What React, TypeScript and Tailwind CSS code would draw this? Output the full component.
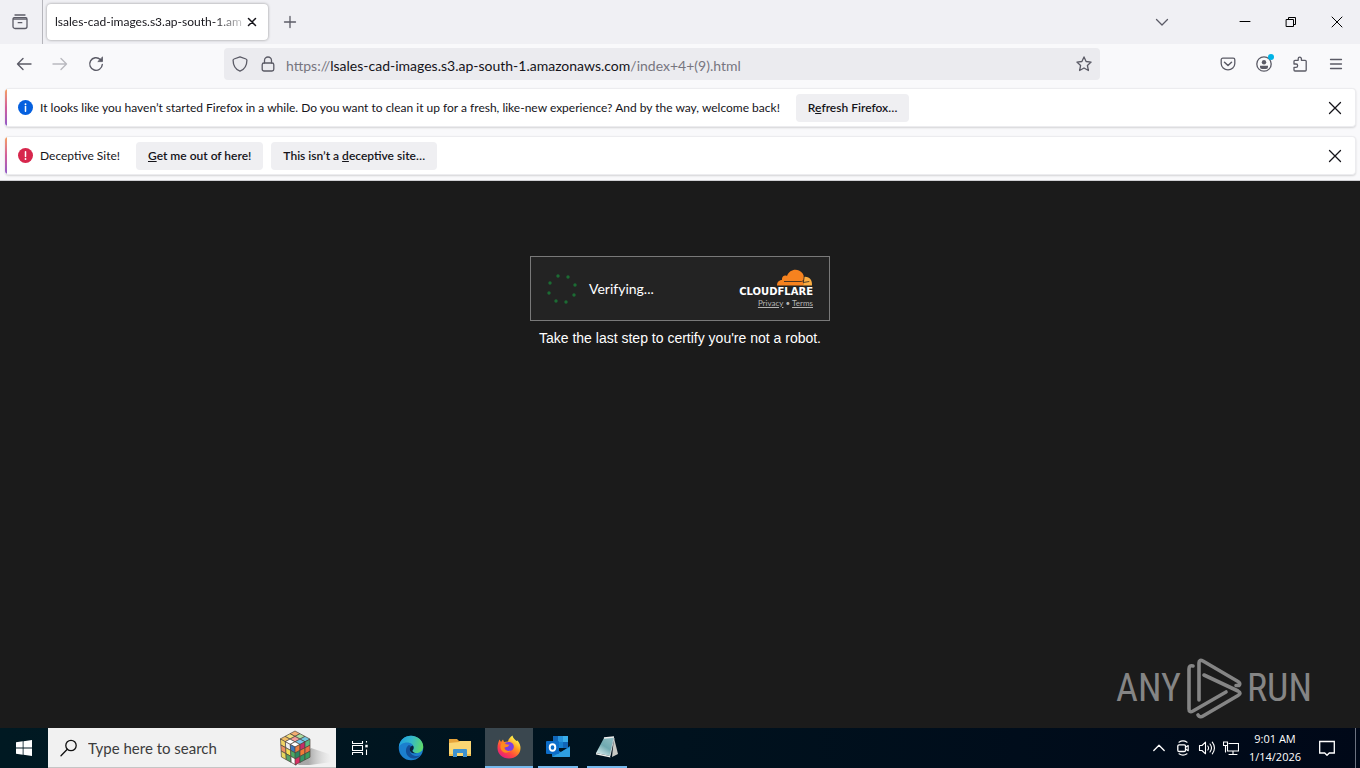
import { ReactNode } from "react";

interface IconProps {
  size?: number;
  className?: string;
  children: ReactNode;
}

const Icon: React.FC<IconProps> = ({ size = 16, className = "", children }) => {
  return (
    <svg
      width={size}
      height={size}
      viewBox={`0 0 ${size} ${size}`}
      fill="none"
      stroke="currentColor"
      strokeWidth="1.3"
      strokeLinecap="round"
      strokeLinejoin="round"
      className={`shrink-0 ${className}`}
      aria-hidden="true"
    >
      {children}
    </svg>
  );
};

interface IconButtonProps {
  label: string;
  className?: string;
  children: ReactNode;
}

const IconButton: React.FC<IconButtonProps> = ({
  label,
  className = "",
  children,
}) => {
  return (
    <button
      aria-label={label}
      className={`flex shrink-0 items-center justify-center ${className}`}
    >
      {children}
    </button>
  );
};

const TabBar = () => {
  return (
    <div className="flex h-11 items-center bg-[#f0f0f4] text-[#15141a]">
      <IconButton
        label="Firefox View"
        className="h-11 w-[43px] border-r border-[#b5b5bb] pr-0.5 text-[#5b5b66]"
      >
        <Icon>
          <path d="M3 1h10M1 5.2h14v7.3a2 2 0 0 1-2 2H3a2 2 0 0 1-2-2V5.2c0-.8.4-1.6 1.2-1.6h11.6c.8 0 1.2.8 1.2 1.6M6.2 8.7h3.6" />
        </Icon>
      </IconButton>
      <div className="ml-1 flex h-9 w-[221px] items-center rounded bg-white pl-2 shadow-[0_0_3px_rgba(0,0,0,0.4)]">
        <span className="flex-1 whitespace-nowrap bg-linear-to-r from-[#15141a] from-85% to-[#15141a]/20 bg-clip-text text-[12px] text-transparent">
          lsales-cad-images.s3.ap-south-1.am
        </span>
        <IconButton label="Close tab" className="mr-1.5 h-6 w-5">
          <Icon size={10}>
            <path d="M1.5 1.5l7 7M8.5 1.5l-7 7" strokeWidth="1.5" />
          </Icon>
        </IconButton>
      </div>
      <IconButton label="New tab" className="ml-1 h-9 w-9 text-[#5b5b66]">
        <Icon size={14}>
          <path d="M7 1.5v11M1.5 7h11" />
        </Icon>
      </IconButton>
      <div className="flex-1" />
      <IconButton label="List all tabs" className="h-9 w-9 text-[#5b5b66]">
        <Icon size={14}>
          <path d="M1.5 4.5L7 10l5.5-5.5" />
        </Icon>
      </IconButton>
      <div className="ml-[42px] flex text-black">
        <IconButton label="Minimize" className="h-11 w-[46px]">
          <Icon size={12}>
            <path d="M1 5.5h10" strokeWidth="1" />
          </Icon>
        </IconButton>
        <IconButton label="Restore" className="h-11 w-[46px]">
          <Icon size={12}>
            <path
              d="M1.5 3.5h7v7h-7zM3.5 3.5v-2h7v7h-2"
              strokeWidth="1"
              strokeLinejoin="miter"
            />
          </Icon>
        </IconButton>
        <IconButton label="Close window" className="h-11 w-[46px]">
          <Icon size={12}>
            <path d="M1 1l10 10M11 1L1 11" strokeWidth="1" />
          </Icon>
        </IconButton>
      </div>
    </div>
  );
};

const NavBar = () => {
  return (
    <div className="flex h-10 items-center bg-[#f9f9fb] px-2 text-[#5b5b66]">
      <IconButton label="Back" className="h-8 w-8">
        <Icon>
          <path d="M15 8H1.5M7 2.5L1.5 8 7 13.5" strokeWidth="1.4" />
        </Icon>
      </IconButton>
      <IconButton label="Forward" className="ml-1 h-8 w-8 opacity-40">
        <Icon>
          <path d="M1 8h13.5M9 2.5L14.500 8 9 13.500" strokeWidth="1.4" />
        </Icon>
      </IconButton>
      <IconButton label="Reload" className="ml-1 h-8 w-8">
        <Icon>
          <path d="M14.300 8.500a6.300 6.300 0 1 1-2-5.100l1.200 1.200" strokeWidth="1.4" />
          <path d="M14.500 1.300v4.300h-4.300z" fill="currentColor" strokeWidth="0.800" />
        </Icon>
      </IconButton>
      <div className="ml-28 flex h-8 flex-1 items-center rounded bg-[#ebebef]">
        <IconButton label="Tracking protection" className="h-8 w-8">
          <Icon>
            <path d="M8 .8l6 2.200c.6.200.9.600.9 1.200C14.900 9 12.500 13.300 8 15.200 3.500 13.300 1.100 9 1.100 4.200c0-.6.300-1 .9-1.200z" />
          </Icon>
        </IconButton>
        <IconButton label="Site information" className="h-8 w-6">
          <Icon>
            <path d="M4.500 7V4.500a3.500 3.500 0 0 1 7 0V7" />
            <rect x="2.200" y="7" width="11.600" height="8" rx="1.800" />
          </Icon>
        </IconButton>
        <label className="ml-1.5 flex flex-1 items-center pt-0.5 text-[14px] text-[#77767f]">
          <span>https://</span>
          <input
            aria-label="Address"
            defaultValue="lsales-cad-images.s3.ap-south-1.amazonaws.com"
            className="field-sizing-content bg-transparent text-[#15141a] outline-none"
          />
          <span>/index+4+(9).html</span>
        </label>
        <IconButton label="Bookmark this page" className="h-8 w-8">
          <Icon>
            <path d="M8 .9l2.100 4.600 5 .6-3.700 3.400 1 5L8 12l-4.400 2.500 1-5L.9 6.100l5-.6z" />
          </Icon>
        </IconButton>
      </div>
      <div className="ml-28 flex gap-1">
        <IconButton label="Save to Pocket" className="h-8 w-8">
          <Icon>
            <path d="M2.800 2.200h10.400c.9 0 1.600.7 1.600 1.600v3.700a6.800 6.300 0 0 1-13.600 0V3.800c0-.9.700-1.600 1.600-1.600z" />
            <path d="M4.500 6.300L8 9.500l3.500-3.200" strokeWidth="1.500" />
          </Icon>
        </IconButton>
        <IconButton label="Account" className="h-8 w-8">
          <span className="relative">
            <Icon>
              <circle cx="8" cy="8" r="7.200" />
              <circle cx="8" cy="6.200" r="2.200" fill="currentColor" stroke="none" />
              <path d="M4 9.800h8v1.200a2 2 0 0 1-2 2H6a2 2 0 0 1-2-2z" fill="currentColor" stroke="none" />
            </Icon>
            <span className="absolute -top-0.5 -right-0.5 h-1.5 w-1.5 rounded-full bg-[#00b3e6]" />
          </span>
        </IconButton>
        <IconButton label="Extensions" className="h-8 w-8">
          <Icon>
            <path d="M2 8V5.300c0-.6.400-1 1-1h3.200V2.800a1.600 1.600 0 0 1 3.200 0v1.500h3.800c.6 0 1 .4 1 1v8.700c0 .6-.4 1-1 1H3c-.6 0-1-.4-1-1v-2.700h2a1.600 1.600 0 0 0 0-3.300z" />
          </Icon>
        </IconButton>
        <IconButton label="Open menu" className="h-8 w-8">
          <Icon>
            <path d="M2.500 3.500h11M2.500 8h11M2.500 12.500h11" />
          </Icon>
        </IconButton>
      </div>
    </div>
  );
};

interface NotificationProps {
  icon: ReactNode;
  message: string;
  children: ReactNode;
}

const Notification: React.FC<NotificationProps> = ({
  icon,
  message,
  children,
}) => {
  return (
    <div className="flex h-[39px] items-center overflow-hidden rounded border border-l-0 border-[#ececef] bg-white text-[12px] text-[#15141a] shadow-[0_1px_2px_rgba(0,0,0,0.15)]">
      <div className="h-full w-0.5 bg-linear-to-b from-[#f5a05c] via-[#d25c9b] to-[#9059c8]" />
      <div className="ml-[11px] flex flex-1 items-center">
        {icon}
        <p className="mr-4 ml-[7px] whitespace-nowrap">{message}</p>
        <div className="flex gap-2">{children}</div>
      </div>
      <IconButton label="Dismiss" className="mr-1 h-8 w-8">
        <Icon size={14}>
          <path d="M1.500 1.500l11 11M12.500 1.500l-11 11" />
        </Icon>
      </IconButton>
    </div>
  );
};

const NotificationButton = ({ children }: { children: ReactNode }) => {
  return (
    <button className="h-7 rounded bg-[#efeff2] px-3 font-semibold whitespace-nowrap">
      {children}
    </button>
  );
};

const CloudflareLogo = () => {
  return (
    <svg width="36" height="17" viewBox="0 0 36 17" aria-hidden="true">
      <path
        d="M26 16.500c.8-3 .5-6-.3-8.300C32 6.500 35.500 11 35 16.500z"
        fill="#fbad41"
      />
      <path
        d="M0 16.500c0-3.400 2-5.600 5-5.600C4.500 7.500 7.500 5.500 10 7 12 1.500 17.500-.5 22 1.500c4 1.700 5.500 5.500 5 9.500l-.9 5.500z"
        fill="#f6821f"
      />
      <path d="M7 12.500h17.500c1 0 1.500-.5 2-1.500M27.300 7l-1 6.500 6-1" stroke="#232323" strokeWidth="0.800" fill="none" />
    </svg>
  );
};

const spinnerDots = [
  [11, 3],
  [21, 4],
  [28, 12],
  [27, 22],
  [19, 29],
  [9, 28],
  [2, 20],
  [3, 10],
];

const Challenge = () => {
  return (
    <main className="flex flex-1 flex-col items-center bg-[#1b1b1b] pt-[75px] text-white">
      <div className="flex h-[65px] w-[300px] items-center border border-[#797979] bg-[#232323] px-4">
        <svg width="32" height="32" viewBox="0 0 32 32" fill="#1c6b33" aria-hidden="true">
          {spinnerDots.map(([cx, cy]) => (
            <circle key={`${cx}-${cy}`} cx={cx} cy={cy} r="1.700" />
          ))}
        </svg>
        <span className="ml-2.5 flex-1 text-[14px]">Verifying...</span>
        <div className="flex flex-col items-end">
          <CloudflareLogo />
          <span className="mt-px font-['DejaVu_Sans',sans-serif] text-[10px] leading-[10px] font-bold">
            CLOUDFLARE
          </span>
          <div className="flex gap-0.5 text-[8px] leading-[12px] text-[#b5b5b5]">
            <a href="#privacy" className="underline">
              Privacy
            </a>
            <span>•</span>
            <a href="#terms" className="underline">
              Terms
            </a>
          </div>
        </div>
      </div>
      <p className="mt-[7px] font-['Liberation_Sans',Arial,sans-serif] text-[14px] leading-5">
        Take the last step to certify you're not a robot.
      </p>
      <div className="mt-auto mr-12 mb-2 flex items-center gap-1 self-end font-['Roboto_Condensed','Roboto',sans-serif] text-[38px] leading-none text-[#858585]">
        <span>ANY</span>
        <svg
          width="58"
          height="64"
          viewBox="0 0 58 64"
          fill="none"
          stroke="currentColor"
          strokeWidth="3.600"
          strokeLinejoin="round"
          strokeLinecap="round"
          aria-hidden="true"
        >
          <path d="M8 10q-4-1-4 3v40q0 4 4 2l33-19" />
          <path d="M14 44V7q0-4 4-2l35 20.500q3 2 1 4l-3 0" />
          <path d="M19 19l34 16q4 2 0 4.500L18 60q-3 2-5-1" />
        </svg>
        <span>RUN</span>
      </div>
    </main>
  );
};

const topColors = [
  "#f2ad72", "#a8dca0", "#6fc6df",
  "#f4de79", "#f39c9c", "#75c6ed",
  "#f0bd65", "#ffffff", "#ffffff",
];
const leftColors = [
  "#f1d465", "#eeeeee", "#3976bc",
  "#ee9063", "#f5dc54", "#4baa64",
  "#e7d75e", "#55a266", "#ffffff",
];
const rightColors = [
  "#eb7b42", "#c62d69", "#58b981",
  "#2c8761", "#f17b36", "#ed6e43",
  "#d82d63", "#339565", "#399e5d",
];

// draws one 3x3 face from a corner and its two edge vectors
const cubeFace = (
  ox: number,
  oy: number,
  ux: number,
  uy: number,
  vx: number,
  vy: number,
  colors: string[]
) =>
  colors.map((fill, i) => {
    const c = i % 3;
    const r = Math.floor(i / 3);
    const point = (a: number, b: number) =>
      `${ox + ux * a + vx * b},${oy + uy * a + vy * b}`;
    return (
      <polygon
        key={`${ox}-${oy}-${vx}-${i}`}
        points={[
          point(c, r),
          point(c + 1, r),
          point(c + 1, r + 1),
          point(c, r + 1),
        ].join(" ")}
        fill={fill}
      />
    );
  });

const RubiksCube = () => {
  return (
    <svg width="56" height="38" viewBox="0 0 56 38" className="shrink-0" aria-hidden="true">
      <defs>
        <linearGradient id="cubeShadow">
          <stop offset="0.300" stopColor="#888" stopOpacity="0.700" />
          <stop offset="1" stopColor="#ccc" stopOpacity="0" />
        </linearGradient>
      </defs>
      <path d="M18 36l13-17 18 6 3 8-22 3z" fill="url(#cubeShadow)" />
      <g stroke="#4d453d" strokeWidth="0.700" strokeLinejoin="round">
        {cubeFace(15, 2, 5, 2.700, -5, 2.700, topColors)}
        {cubeFace(0.500, 10, 4.900, 2.700, 0.300, 6, leftColors)}
        {cubeFace(15, 18, 5, -2.600, 0, 6, rightColors)}
      </g>
    </svg>
  );
};

const EdgeIcon = () => (
  <svg width="26" height="26" viewBox="0 0 24 24" aria-hidden="true">
    <defs>
      <linearGradient id="edgeTop" x1="0" y1="0.300" x2="1" y2="0.500">
        <stop offset="0" stopColor="#1d9fe0" />
        <stop offset="0.500" stopColor="#35b9c8" />
        <stop offset="1" stopColor="#5fd968" />
      </linearGradient>
    </defs>
    <circle cx="12" cy="12" r="11.300" fill="#1b7fce" />
    <path d="M.7 11.500C1.200 5 6 .7 12 .7c6.500 0 11.300 4.800 11.300 10 0 4-3 6-6 6-2.500 0-4-1-4-2 0-.7 1.200-1 1.200-3C14.500 9 12 7 8.500 7 4.500 7 1.500 9 .7 11.500z" fill="url(#edgeTop)" />
    <path d="M10 9.300c-3 2-3.500 6.500-1.200 9.700 3 4 9 3.300 12.300-.500-4 2-9.200.5-10.100-3.500-.4-2 .2-3 1.300-4-.5-.8-1.300-1.700-2.300-1.700z" fill="#124f9a" />
    <path d="M14.500 11.500c0 2-1.200 2.300-1.200 3 0 1 1.500 2.200 4 2.200-3 .6-5.500-.2-6.300-2.200-.6-2 .5-4 2.600-4.800.6.500.9 1.100.9 1.800z" fill="#08213a" />
  </svg>
);

const FolderIcon = () => (
  <svg width="24" height="24" viewBox="0 0 24 24" aria-hidden="true">
    <path d="M1 3h8l2 2h12v6H1z" fill="#e6a33a" />
    <path d="M1 7l10-1 1-1h11v15H1z" fill="#fbd673" />
    <path d="M5 21v-7q0-1 1-1h12q1 0 1 1v7h-4v-4H9v4z" fill="#3f92d0" />
    <path d="M1 18h4v2H1zM19 18h4v2h-4z" fill="#f2bc4c" />
  </svg>
);

const FirefoxIcon = () => (
  <svg width="24" height="24" viewBox="0 0 24 24" aria-hidden="true">
    <defs>
      <linearGradient id="foxBody" x1="0.850" y1="0.050" x2="0.200" y2="0.950">
        <stop offset="0.100" stopColor="#fff04a" />
        <stop offset="0.400" stopColor="#ff9820" />
        <stop offset="0.700" stopColor="#ff483f" />
        <stop offset="1" stopColor="#e51b80" />
      </linearGradient>
    </defs>
    <path d="M2.500 4.500L4 7l2-2.500L7 7l4-.5c.5-2.500 2-4.500 4.500-6 .5 2.500 2 3.500 4 5.500l1-.5c2.300 3 3 5 3 7.500C23.500 19 18.500 23.500 12 23.500S.5 19 .5 13c0-3.500.8-6 2-8.500z" fill="url(#foxBody)" />
    <path d="M8 8c2.500-1.500 6-1.500 8 1 2 3 .500 7-4 7-2.500 0-4.500-1.500-4.500-3.500l3.500-1 1.500-1.800L9 9.500z" fill="#7b3ee0" />
    <path d="M6 6.500L7.500 9l4 1-1 1.800-3.300.7c.5 3 3.300 4 6.300 3-3 4-9 2.500-10-2.500-.4-2.500.7-5 2.500-6.500z" fill="#ff8a1e" />
  </svg>
);

const OutlookIcon = () => (
  <svg width="26" height="24" viewBox="0 0 26 24" aria-hidden="true">
    <path d="M8 1h15v12H8z" fill="#1066b8" />
    <path d="M13 1h5v6h-5z" fill="#2793dc" />
    <path d="M18 1h5v6h-5z" fill="#3aaeea" />
    <path d="M13 7h5v6h-5z" fill="#1580d0" />
    <path d="M7 12l9 5 9-6v11H8q-1 0-1-1z" fill="#1478c8" />
    <path d="M7 22l18-10v9q0 1-1 1z" fill="#2f9fe0" />
    <rect x="1" y="6" width="13" height="13" rx="1" fill="#0c6cc8" />
    <ellipse cx="7.500" cy="12.500" rx="2.800" ry="3.200" fill="none" stroke="#fff" strokeWidth="1.900" />
  </svg>
);

const NotepadIcon = () => (
  <svg width="26" height="24" viewBox="0 0 26 24" aria-hidden="true">
    <defs>
      <linearGradient id="notePage" x1="0.800" y1="0" x2="0.200" y2="1">
        <stop offset="0" stopColor="#8fbcc2" />
        <stop offset="0.500" stopColor="#6fa9b0" />
        <stop offset="1" stopColor="#e0f1f2" />
      </linearGradient>
    </defs>
    <path d="M20 3l4 16-6 3z" fill="#c9c9c4" />
    <path d="M10 3l10-1-4 19-14-3z" fill="url(#notePage)" />
    <path d="M2 18l14 3 .5 1.500L2 19.500z" fill="#f4f4f0" />
    <path d="M10 3l10-1" stroke="#eee" strokeWidth="1.500" />
    <path d="M20 3l-4 18" stroke="#eee" strokeWidth="0.800" />
  </svg>
);

interface TaskProps {
  label: string;
  active?: boolean;
  running?: boolean;
  children: ReactNode;
}

const Task: React.FC<TaskProps> = ({ label, active, running, children }) => {
  return (
    <button
      aria-label={label}
      className={`flex h-10 w-12 flex-col items-center ${active ? "bg-[#3a474f]" : ""}`}
    >
      <span className="flex flex-1 items-center">{children}</span>
      {running ? (
        <span className={`h-0.5 bg-[#76b9ed] ${active ? "w-12" : "w-10"}`} />
      ) : null}
    </button>
  );
};

const Taskbar = () => {
  return (
    <footer className="flex h-10 items-center bg-linear-to-r from-[#001922] via-[#00121e] to-[#000818] text-white">
      <IconButton label="Start" className="h-10 w-12">
        <svg width="16" height="16" viewBox="0 0 16 16" fill="#fff" aria-hidden="true">
          <path d="M0 2.200L6.700 1.300V7.600H0zM7.500 1.200L16 0v7.600H7.500zM0 8.400h6.700v6.300L0 13.800zM7.500 8.400H16V16l-8.500-1.200z" />
        </svg>
      </IconButton>
      <label className="flex h-10 w-72 items-center border-b border-[#c5c5c5] bg-[#f1f1f1] text-[#111]">
        <Icon size={18} className="ml-3">
          <circle cx="11" cy="6.500" r="5.200" />
          <path d="M7.300 10.300L1 16.800" />
        </Icon>
        <input
          type="text"
          aria-label="Search"
          placeholder="Type here to search"
          className="ml-2.5 w-full min-w-0 flex-1 bg-transparent pt-0.5 text-[15px] outline-none placeholder:text-[#3c3c3c]"
        />
        <RubiksCube />
      </label>
      <IconButton label="Task view" className="h-10 w-12">
        <Icon>
          <path
            d="M.5 1v2.500h10V1M.5 15v-2.500h10V15M.5 5.500h10v5H.5zM14.500 1v1.500M14.500 9.500V15"
            strokeWidth="1.100"
            strokeLinecap="butt"
          />
          <path d="M13.300 4.800h2.400v2.600h-2.400z" fill="currentColor" stroke="none" />
        </Icon>
      </IconButton>
      <div className="ml-[3px] flex flex-1 gap-px">
        <Task label="Microsoft Edge">
          <EdgeIcon />
        </Task>
        <Task label="File Explorer">
          <FolderIcon />
        </Task>
        <Task label="Firefox" active running>
          <FirefoxIcon />
        </Task>
        <Task label="Outlook" running>
          <OutlookIcon />
        </Task>
        <Task label="Notepad" running>
          <NotepadIcon />
        </Task>
      </div>
      <IconButton label="Show hidden icons" className="h-10 w-6">
        <Icon size={12}>
          <path d="M.8 8.500L6 3.300l5.200 5.200" />
        </Icon>
      </IconButton>
      <IconButton label="Meet now" className="h-10 w-6">
        <Icon>
          <path d="M4 2.200Q8-.5 12 2.200M4 13.800q4 2.700 8 0" strokeWidth="1.100" />
          <rect x="2.800" y="4.800" width="7.700" height="6.700" rx="1.300" />
          <path d="M10.500 7.300l2.700-1.800v5.300l-2.700-1.800" strokeWidth="1.100" />
        </Icon>
      </IconButton>
      <IconButton label="Volume" className="h-10 w-6">
        <Icon size={18}>
          <path d="M1.500 6.500H4l3.500-3.300v11.600L4 11.500H1.500z" strokeWidth="1.100" />
          <path d="M9.800 7q1.500 2 0 4M12 5q3 4 0 8M14.300 3.200q4.300 5.800 0 11.600" strokeWidth="1.100" />
        </Icon>
      </IconButton>
      <IconButton label="Network" className="h-10 w-6">
        <Icon>
          <path
            d="M6 3.500h9.500v7.500H4.500V6M10 11v3M6 14.500h8M.5 2h4v3.500h-4zM2.500 5.500v6.500"
            strokeWidth="1.100"
            strokeLinejoin="miter"
          />
        </Icon>
      </IconButton>
      <button className="flex h-10 w-16 flex-col items-center justify-center font-['Open_Sans',sans-serif] text-[11px] leading-[18px]">
        <span>9:01 AM</span>
        <span>1/14/2026</span>
      </button>
      <IconButton label="Notifications" className="h-10 w-10">
        <Icon>
          <path d="M.7 1.500h14.600v11.500h-5L8 15.300 5.700 13h-5z" strokeLinejoin="miter" />
        </Icon>
      </IconButton>
      <IconButton label="Show desktop" className="ml-2 h-10 w-[5px] border-l border-[#6c7280]">
        <span />
      </IconButton>
    </footer>
  );
};

export default function App() {
  return (
    <div className="flex min-h-screen flex-col font-['Lato','Noto_Sans',sans-serif]">
      <TabBar />
      <NavBar />
      <div className="flex flex-col gap-[9px] border-b border-[#cfcfd3] bg-[#f9f9fb] pt-1 pr-1 pb-[5px] pl-[5px]">
        <Notification
          message="It looks like you haven’t started Firefox in a while. Do you want to clean it up for a fresh, like-new experience? And by the way, welcome back!"
          icon={
            <svg width="15" height="15" viewBox="0 0 16 16" aria-hidden="true">
              <circle cx="8" cy="8" r="8" fill="#0560df" />
              <path d="M8 7v5" stroke="#fff" strokeWidth="1.600" strokeLinecap="round" />
              <circle cx="8" cy="4.500" r="1" fill="#fff" />
            </svg>
          }
        >
          <NotificationButton>
            R<u>e</u>fresh Firefox…
          </NotificationButton>
        </Notification>
        <Notification
          message="Deceptive Site!"
          icon={
            <svg width="15" height="15" viewBox="0 0 16 16" aria-hidden="true">
              <circle cx="8" cy="8" r="8" fill="#d7264c" />
              <path d="M8 4v5" stroke="#fff" strokeWidth="1.600" strokeLinecap="round" />
              <circle cx="8" cy="11.700" r="1" fill="#fff" />
            </svg>
          }
        >
          <NotificationButton>
            <u>G</u>et me out of here!
          </NotificationButton>
          <NotificationButton>
            This isn’t a <u>d</u>eceptive site…
          </NotificationButton>
        </Notification>
      </div>
      <Challenge />
      <Taskbar />
    </div>
  );
}
